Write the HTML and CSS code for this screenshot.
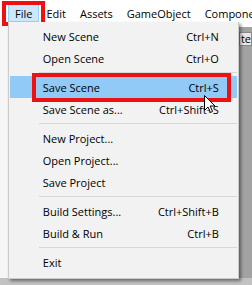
FILE: index.html
```html
<html>
<head>
  <title>File menu</title>
  <link rel="stylesheet" href="styles.css">
</head>
<body>
<div class="menubar">
  <span class="top-item open">File</span>
  <span class="top-item">Edit</span>
  <span class="top-item">Assets</span>
  <span class="top-item">GameObject</span>
  <span class="top-item">Component</span>
</div>
<div class="workspace">
  <div class="left-strip"></div>
  <div class="menu">
    <div class="item"><span>New Scene</span><span>Ctrl+N</span></div>
    <div class="item"><span>Open Scene</span><span>Ctrl+O</span></div>
    <div class="sep"></div>
    <div class="item hover"><span>Save Scene</span><span>Ctrl+S</span></div>
    <div class="item"><span>Save Scene as...</span><span>Ctrl+Shift+S</span></div>
    <div class="sep"></div>
    <div class="item"><span>New Project...</span></div>
    <div class="item"><span>Open Project...</span></div>
    <div class="item"><span>Save Project</span></div>
    <div class="sep"></div>
    <div class="item"><span>Build Settings...</span><span>Ctrl+Shift+B</span></div>
    <div class="item"><span>Build &amp; Run</span><span>Ctrl+B</span></div>
    <div class="sep"></div>
    <div class="item"><span>Exit</span></div>
  </div>
  <div class="right-area">
    <div class="field">te</div>
  </div>
</div>
<div class="bottom-band"></div>

<div class="mark mark-file"></div>
<div class="mark mark-save"></div>
<svg class="cursor" width="12" height="19" viewBox="0 0 12 19">
  <path d="M0.5 0.5 L0.5 15.5 L4 12 L6.5 17.5 L8.5 16.5 L6.2 11 L11 11 Z" fill="#fff" stroke="#000" stroke-width="1" stroke-linejoin="round"/>
</svg>
</body>
</html>
```

FILE: styles.css
```css
body {
  margin: 0;
  background: #ffffff;
  font-family: "Open Sans", "Liberation Sans", sans-serif;
  font-size: 11px;
  color: #000;
  overflow: hidden;
}
.menubar {
  display: flex;
  height: 22px;
  padding-left: 8px;
  background: #ffffff;
  white-space: nowrap;
  overflow: hidden;
}
.top-item {
  display: flex;
  align-items: center;
  padding: 0 6px;
  margin-top: 4px;
  height: 16px;
  border: 1px solid transparent;
}
.top-item.open {
  background: #cce8ff;
  border-color: #99d1ff;
}
.workspace {
  display: flex;
  height: 256px;
}
.left-strip {
  width: 8px;
  background: #f6f6f6;
}
.menu {
  position: relative;
  z-index: 1;
  width: 233px;
  height: 251px;
  padding: 3px 1px 2px;
  background: #f2f2f2;
  border: 1px solid #cccccc;
  border-top: 0;
  box-shadow: 2px 2px 3px rgba(0, 0, 0, 0.45);
}
.item {
  display: flex;
  justify-content: space-between;
  align-items: center;
  height: 22px;
  padding: 0 18px 0 33px;
  white-space: nowrap;
}
.item.hover {
  background: #91c9f7;
}
.sep {
  height: 4px;
  padding-top: 3px;
  margin-left: 29px;
}
.sep::after {
  content: "";
  display: block;
  height: 1px;
  background: #d7d7d7;
}
.right-area {
  flex: 1;
  background: #a2a2a2;
  border-top: 5px solid #ffffff;
  padding-top: 5px;
}
.field {
  height: 12px;
  line-height: 12px;
  background: #e6e6e6;
  border: 1px solid #888;
  padding-left: 1px;
}
.bottom-band {
  height: 7px;
  background: #c2c2c2;
}
.mark {
  position: absolute;
  border: 4px solid #ee1111;
  box-sizing: border-box;
}
.mark-file {
  left: 2px;
  top: 1px;
  width: 43px;
  height: 25px;
}
.mark-save {
  left: 32px;
  top: 73px;
  width: 199px;
  height: 29px;
  z-index: 2;
}
.cursor {
  position: absolute;
  left: 204px;
  top: 95px;
  z-index: 3;
}
```
